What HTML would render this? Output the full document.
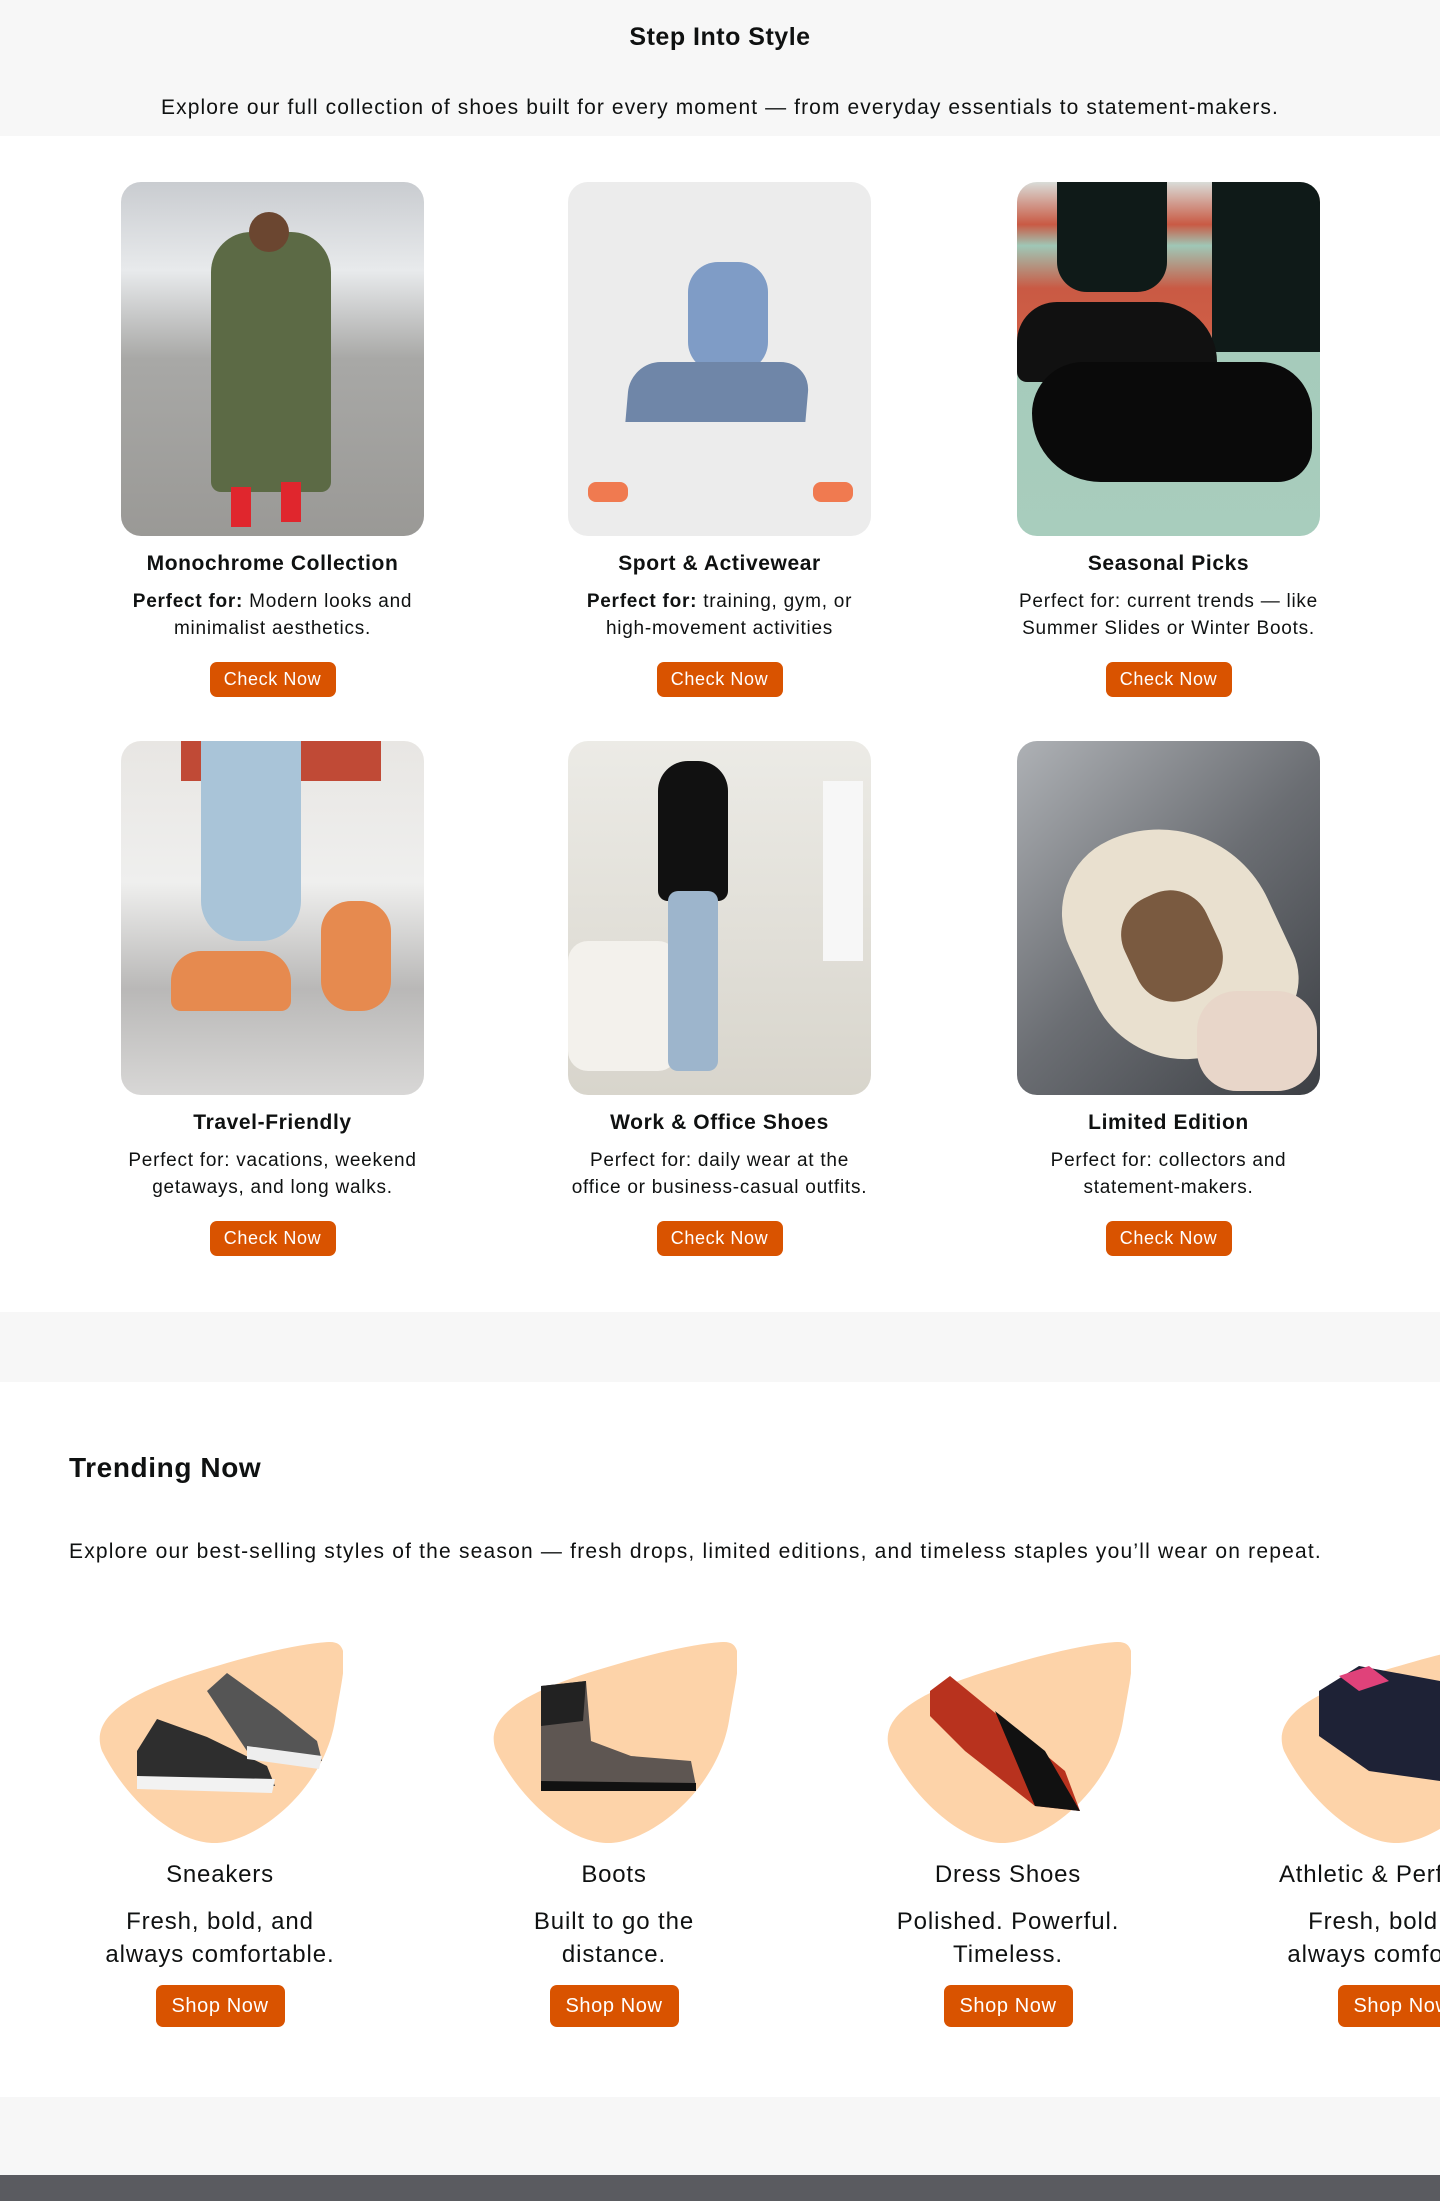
<!DOCTYPE html>
<html><head><meta charset="utf-8"><style>
*{box-sizing:border-box;margin:0;padding:0}
html,body{overflow:hidden}
body{width:1440px;height:2201px;background:#fff;font-family:"Liberation Sans",Arial,sans-serif;color:#0f1111;position:relative}
.top{position:absolute;left:0;top:0;width:1440px;height:136px;background:#f7f7f7}
.top h1{position:absolute;top:23px;width:100%;text-align:center;font-size:25px;font-weight:bold;letter-spacing:0.5px}
.top p{position:absolute;top:96px;width:100%;text-align:center;font-size:21px;letter-spacing:1.1px}
.card{position:absolute;width:303px;text-align:center}
.img{width:303px;height:354px;border-radius:20px;overflow:hidden;position:relative}
.card h3{margin-top:16px;font-size:21px;font-weight:bold;height:30px;letter-spacing:0.6px}
.card p{margin-top:6px;font-size:19px;line-height:27px;height:60px;letter-spacing:0.75px;margin-left:-20px;margin-right:-20px}
.btn{display:inline-block;background:#d95300;color:#fff;border-radius:7px;letter-spacing:0.6px}
.card .btn{margin-top:14px;width:126px;height:35px;line-height:35px;font-size:18px}
.band{position:absolute;left:0;width:1440px;background:#f7f7f7}
.t2{position:absolute;left:69px;top:1452px;font-size:28px;letter-spacing:0.6px;font-weight:600}
.p2{position:absolute;left:69px;top:1540px;font-size:21px;letter-spacing:1.2px}
.item{position:absolute;top:1641px;width:246px;text-align:center}
.item svg{display:block}
.item h4{margin-top:18px;font-size:24px;font-weight:normal;height:34px;letter-spacing:0.8px;white-space:nowrap}
.item p{margin-top:10px;font-size:24px;line-height:33px;height:66px;letter-spacing:0.9px;white-space:nowrap}
.item .btn{margin-top:14px;width:129px;height:42px;line-height:42px;font-size:20px}
.s{position:absolute}
</style></head><body>
<div class="top"><h1>Step Into Style</h1><p>Explore our full collection of shoes built for every moment — from everyday essentials to statement-makers.</p></div>

<div class="card" style="left:121px;top:182px"><div class="img" style="background:linear-gradient(#c9ccd0 0,#e8eaec 25%,#a8a8a6 50%,#9a9996 100%)">
<div class="s" style="left:90px;top:50px;width:120px;height:260px;background:#5c6a45;border-radius:40px 40px 10px 10px"></div>
<div class="s" style="left:128px;top:30px;width:40px;height:40px;background:#6b4630;border-radius:50%"></div>
<div class="s" style="left:110px;top:305px;width:20px;height:40px;background:#e0262d"></div><div class="s" style="left:160px;top:300px;width:20px;height:40px;background:#e0262d"></div></div>
<h3>Monochrome Collection</h3><p><b>Perfect for:</b> Modern looks and<br>minimalist aesthetics.</p><span class="btn">Check Now</span></div>

<div class="card" style="left:568px;top:182px"><div class="img" style="background:#ececec">
<div class="s" style="left:120px;top:80px;width:80px;height:110px;background:#7f9cc6;border-radius:30px"></div>
<div class="s" style="left:60px;top:180px;width:180px;height:60px;background:#6f86a8;border-radius:30px 30px 0 0;transform:skewX(-5deg)"></div>
<div class="s" style="left:20px;top:300px;width:40px;height:20px;background:#f07a50;border-radius:8px"></div><div class="s" style="left:245px;top:300px;width:40px;height:20px;background:#f07a50;border-radius:8px"></div></div>
<h3>Sport &amp; Activewear</h3><p><b>Perfect for:</b> training, gym, or<br>high-movement activities</p><span class="btn">Check Now</span></div>

<div class="card" style="left:1017px;top:182px"><div class="img" style="background:linear-gradient(#d9dcd8 0,#c95a44 12%,#9fc7b6 18%,#c95a44 30%,#cf5e46 42%,#a6cbbb 48%,#a8cdbd 100%)">
<div class="s" style="left:40px;top:0;width:110px;height:110px;background:#0f1a18;border-radius:0 0 30px 30px"></div>
<div class="s" style="left:195px;top:0;width:110px;height:170px;background:#0f1a18"></div>
<div class="s" style="left:0;top:120px;width:200px;height:80px;background:#111;border-radius:40px 60px 10px 10px"></div>
<div class="s" style="left:15px;top:180px;width:280px;height:120px;background:#0a0a0a;border-radius:60px 60px 40px 80px"></div></div>
<h3>Seasonal Picks</h3><p>Perfect for: current trends — like<br>Summer Slides or Winter Boots.</p><span class="btn">Check Now</span></div>

<div class="card" style="left:121px;top:741px"><div class="img" style="background:linear-gradient(#e8e6e3 0,#efefee 40%,#b9b8b7 70%,#d8d7d6 100%)">
<div class="s" style="left:60px;top:0;width:200px;height:40px;background:#c04a36"></div>
<div class="s" style="left:80px;top:0;width:100px;height:200px;background:#a9c4d8;border-radius:0 0 40px 40px"></div>
<div class="s" style="left:50px;top:210px;width:120px;height:60px;background:#e68a4f;border-radius:30px 30px 10px 10px"></div>
<div class="s" style="left:200px;top:160px;width:70px;height:110px;background:#e68a4f;border-radius:30px"></div></div>
<h3>Travel-Friendly</h3><p>Perfect for: vacations, weekend<br>getaways, and long walks.</p><span class="btn">Check Now</span></div>

<div class="card" style="left:568px;top:741px"><div class="img" style="background:linear-gradient(#ecebe6,#d8d5cc)">
<div class="s" style="left:0;top:200px;width:110px;height:130px;background:#f3f1ec;border-radius:20px"></div>
<div class="s" style="left:90px;top:20px;width:70px;height:140px;background:#111;border-radius:30px 30px 10px 10px"></div>
<div class="s" style="left:100px;top:150px;width:50px;height:180px;background:#9db5cc;border-radius:10px"></div>
<div class="s" style="left:255px;top:40px;width:40px;height:180px;background:#f7f7f7"></div></div>
<h3>Work &amp; Office Shoes</h3><p>Perfect for: daily wear at the<br>office or business-casual outfits.</p><span class="btn">Check Now</span></div>

<div class="card" style="left:1017px;top:741px"><div class="img" style="background:linear-gradient(135deg,#aeb1b5,#6b6e73 50%,#3c3f44)">
<div class="s" style="left:60px;top:80px;width:200px;height:240px;background:#e9e0cf;border-radius:80px 120px 60px 100px;transform:rotate(-25deg)"></div>
<div class="s" style="left:110px;top:150px;width:90px;height:110px;background:#7a5a40;border-radius:40px;transform:rotate(-25deg)"></div>
<div class="s" style="left:180px;top:250px;width:120px;height:100px;background:#e8d6c9;border-radius:40px"></div></div>
<h3>Limited Edition</h3><p>Perfect for: collectors and<br>statement-makers.</p><span class="btn">Check Now</span></div>

<div class="band" style="top:1312px;height:70px"></div>
<div class="t2">Trending Now</div>
<div class="p2">Explore our best-selling styles of the season — fresh drops, limited editions, and timeless staples you’ll wear on repeat.</div>

<div class="item" style="left:97px"><svg width="246" height="202" viewBox="0 0 246 202"><path d="M232 1C256 0 246 30 238 80C226 150 160 200 120 202C80 204 30 160 5 110C-10 70 50 45 120 25C170 10 210 2 232 1Z" fill="#fdd3a9"/><path d="M40 110L60 78L110 96L170 125L178 145L40 147Z" fill="#2e2e2e"/><path d="M40 135L178 138L175 152L40 148Z" fill="#f2f2f2"/><path d="M110 50L130 32L180 68L220 100L225 120L150 110Z" fill="#555"/><path d="M150 105L225 115L222 128L150 118Z" fill="#eee"/></svg>
<h4>Sneakers</h4><p>Fresh, bold, and<br>always comfortable.</p><span class="btn">Shop Now</span></div>

<div class="item" style="left:491px"><svg width="246" height="202" viewBox="0 0 246 202"><path d="M232 1C256 0 246 30 238 80C226 150 160 200 120 202C80 204 30 160 5 110C-10 70 50 45 120 25C170 10 210 2 232 1Z" fill="#fdd3a9"/><path d="M50 45L95 40L100 100L140 115L200 120L205 145L50 142Z" fill="#5e5652"/><path d="M50 45L95 40L92 80L50 85Z" fill="#222"/><path d="M50 140L205 142L205 150L50 150Z" fill="#111"/></svg>
<h4>Boots</h4><p>Built to go the<br>distance.</p><span class="btn">Shop Now</span></div>

<div class="item" style="left:885px"><svg width="246" height="202" viewBox="0 0 246 202"><path d="M232 1C256 0 246 30 238 80C226 150 160 200 120 202C80 204 30 160 5 110C-10 70 50 45 120 25C170 10 210 2 232 1Z" fill="#fdd3a9"/><path d="M45 50L65 35L120 80L180 130L195 170L150 165L80 110L45 75Z" fill="#b8321e"/><path d="M110 70L160 110L195 170L150 165Z" fill="#111"/></svg>
<h4>Dress Shoes</h4><p>Polished. Powerful.<br>Timeless.</p><span class="btn">Shop Now</span></div>

<div class="item" style="left:1279px"><svg width="246" height="202" viewBox="0 0 246 202"><path d="M232 1C256 0 246 30 238 80C226 150 160 200 120 202C80 204 30 160 5 110C-10 70 50 45 120 25C170 10 210 2 232 1Z" fill="#fdd3a9"/><path d="M40 50L80 25L161 40L161 140L90 130L40 95Z" fill="#1e2236"/><path d="M60 35L90 25L110 40L80 50Z" fill="#e0427a"/></svg>
<h4>Athletic &amp; Performance</h4><p>Fresh, bold, and<br>always comfortable.</p><span class="btn">Shop Now</span></div>

<div class="band" style="top:2097px;height:78px"></div>
<div class="band" style="top:2175px;height:26px;background:#5a5b60"></div>
</body></html>
